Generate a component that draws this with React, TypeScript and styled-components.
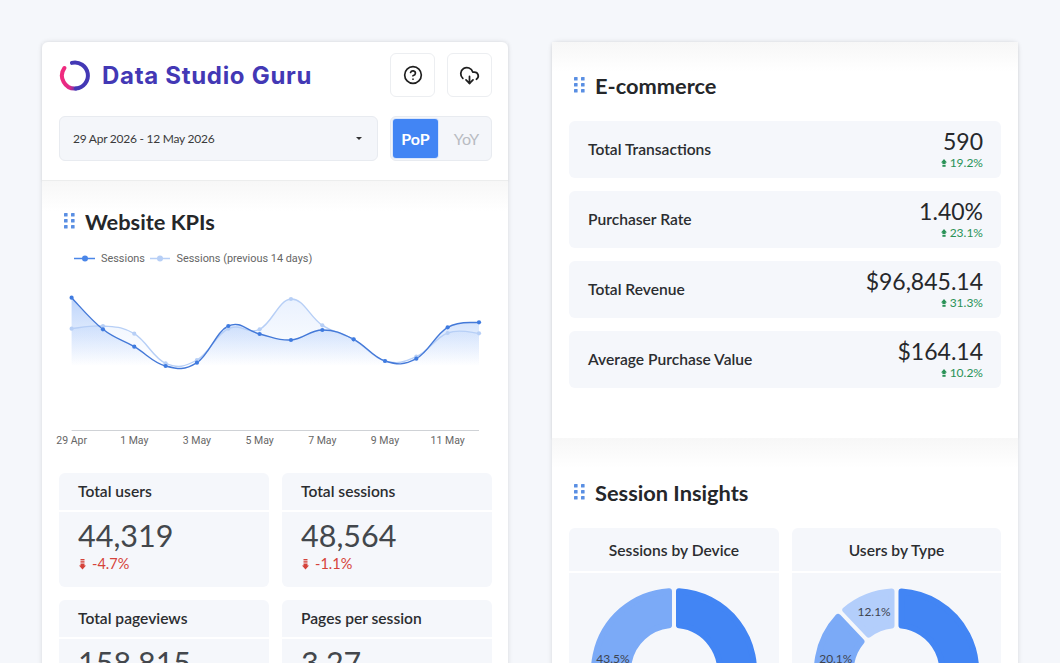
import React from "react";
import styled, { createGlobalStyle } from "styled-components";
import { CircleHelp, CloudDownload } from "lucide-react";

const Global = createGlobalStyle`
  html, body { margin: 0; padding: 0; height: 663px; overflow: hidden; background: #f5f7fb; }
  * { box-sizing: border-box; }
  body { font-family: "Lato", "Liberation Sans", sans-serif; color: #222; }
`;

const Page = styled.div`
  height: 663px;
  overflow: hidden;
  display: flex;
  gap: 44px;
  padding: 42px 42px 0;
  align-items: flex-start;
`;
const Card = styled.main`
  flex: 0 0 466px;
  background: #fff;
  border-radius: 6px 6px 0 0;
  box-shadow: 0 0 5px rgba(0, 0, 0, 0.12);
`;
const Header = styled.header`
  position: relative;
  padding: 11px 16px 19px 17px;
  border-bottom: 1px solid #eceded;
  box-shadow: 0 1px 3px rgba(0, 0, 0, 0.05);
  display: flex;
  flex-direction: column;
  gap: 19px;
  height: 139px;
`;
const TopRow = styled.div`
  display: flex;
  align-items: center;
  gap: 12px;
`;
const Logo = styled.div`
  flex: 1;
  display: flex;
  align-items: center;
  gap: 10px;
  font-family: "Inter", sans-serif;
  font-weight: 700;
  font-size: 24px;
  letter-spacing: 0.7px;
  color: #4338b5;
`;
const IconButton = styled.button`
  width: 45px;
  height: 44px;
  padding: 0;
  display: flex;
  align-items: center;
  justify-content: center;
  background: #fff;
  border: 1px solid #eceef1;
  border-radius: 6px;
  color: #1f1f1f;
`;
const Controls = styled.div`
  display: flex;
  gap: 12px;
`;
const DateSelect = styled.div`
  flex: 1;
  height: 45px;
  display: flex;
  align-items: center;
  justify-content: space-between;
  padding: 0 15px 0 13px;
  background: #f4f6fa;
  border: 1px solid #e8ebf0;
  border-radius: 6px;
  font-size: 12px;
  letter-spacing: -0.25px;
  color: #3a3a3a;
`;
const Caret = styled.span`
  width: 0;
  height: 0;
  border-left: 3px solid transparent;
  border-right: 3px solid transparent;
  border-top: 3px solid #333;
`;
const Toggle = styled.div`
  width: 102px;
  height: 45px;
  padding: 2px;
  display: flex;
  background: #f4f6fa;
  border: 1px solid #e8ebf0;
  border-radius: 6px;
`;
const ToggleItem = styled.div<{ $active?: boolean }>`
  flex: 0 0 ${(p) => (p.$active ? "45px" : "53px")};
  display: flex;
  align-items: center;
  justify-content: center;
  padding-left: ${(p) => (p.$active ? 0 : 4)}px;
  border-radius: 3px;
  font-size: 16px;
  font-weight: ${(p) => (p.$active ? 700 : 400)};
  color: ${(p) => (p.$active ? "#fff" : "#b9bcc2")};
  background: ${(p) => (p.$active ? "#4285f4" : "transparent")};
  box-shadow: ${(p) => (p.$active ? "0 0 0 1px #dbe7fb" : "none")};
`;
const Section = styled.section<{ $top: number; $bottom?: number; $raised?: boolean }>`
  position: relative;
  padding: ${(p) => p.$top}px 17px ${(p) => p.$bottom ?? 0}px;
  background: linear-gradient(#f7f7f7, #fff 30px);
  box-shadow: ${(p) => (p.$raised ? "0 1px 3px rgba(0, 0, 0, 0.06)" : "none")};
`;
const LeftSection = styled(Section)`
  padding-right: 16px;
`;
const TitleRow = styled.div`
  display: flex;
  align-items: center;
  gap: 10px;
  height: 28px;
  padding: 0 0 2px 5px;
  font-size: 21.8px;
  font-weight: 700;
  color: #25272a;
`;
const ChartBox = styled.div`
  margin-top: 9px;
  height: 205px;
`;
const ChartSvg = styled.svg`
  display: block;
  overflow: visible;
`;
const KpiGrid = styled.div`
  margin-top: 23px;
  display: grid;
  grid-template-columns: 210px 210px;
  justify-content: space-between;
  row-gap: 13px;
`;
const Kpi = styled.article`
  border-radius: 6px;
  overflow: hidden;
  display: flex;
  flex-direction: column;
  gap: 2px;
`;
const KpiHead = styled.div`
  height: 37px;
  padding: 0 0 1px 19px;
  display: flex;
  align-items: center;
  background: #f5f7fb;
  font-size: 15.6px;
  font-weight: 600;
  color: #2b2d30;
`;
const KpiBody = styled.div`
  height: 75px;
  padding: 5px 0 0 19px;
  background: #f5f7fb;
`;
const KpiValue = styled.div`
  font-size: 30.5px;
  line-height: 36px;
  color: #43474c;
`;
const KpiDelta = styled.div`
  display: flex;
  align-items: center;
  gap: 6px;
  margin-top: 2px;
  padding-left: 1px;
  font-size: 14.5px;
  line-height: 18px;
  color: #d5423a;
`;
const RowList = styled.div`
  margin-top: 21px;
  display: flex;
  flex-direction: column;
  gap: 13px;
`;
const Row = styled.article`
  height: 57px;
  padding: 0 18px 2px 19px;
  display: flex;
  align-items: center;
  justify-content: space-between;
  background: #f5f7fb;
  border-radius: 6px;
`;
const RowLabel = styled.div`
  font-size: 15.6px;
  font-weight: 600;
  color: #2b2d30;
`;
const RowValues = styled.div`
  display: flex;
  flex-direction: column;
  align-items: flex-end;
`;
const RowValue = styled.div`
  font-size: 23px;
  line-height: 27px;
  color: #26282b;
`;
const RowDelta = styled.div`
  display: flex;
  align-items: center;
  gap: 3px;
  margin-top: 1px;
  font-size: 12px;
  line-height: 14px;
  color: #2a9257;
`;
const DonutGrid = styled.div`
  margin-top: 21px;
  display: grid;
  grid-template-columns: 210px 209px;
  justify-content: space-between;
`;
const DonutCard = styled.article`
  border-radius: 6px 6px 0 0;
  overflow: hidden;
  display: flex;
  flex-direction: column;
  gap: 2px;
`;
const DonutHead = styled.div`
  height: 43px;
  display: flex;
  align-items: center;
  justify-content: center;
  background: #f5f7fb;
  font-size: 15.6px;
  font-weight: 600;
  color: #2b2d30;
`;
const DonutBody = styled.div`
  height: 190px;
  background: #f5f7fb;
  display: flex;
  justify-content: center;
`;

const Dots = () => (
  <svg width="11" height="16" viewBox="0 0 11 16" fill="#5a8fe3">
    {[0, 6, 12].map((y) =>
      [0, 7].map((x) => <rect key={`${x}${y}`} x={x} y={y} width="3.6" height="3.6" rx="0.6" />)
    )}
  </svg>
);

const DownIcon = () => (
  <svg width="7" height="11" viewBox="0 0 7 11" fill="#d5423a">
    <rect x="1.5" y="0" width="4" height="1.4" />
    <rect x="1.5" y="2.2" width="4" height="1.4" />
    <path d="M1.5 4.4h4V6.4H7L3.5 10.6 0 6.4H1.5z" />
  </svg>
);
const UpIcon = () => (
  <svg width="6" height="8" viewBox="0 0 6 8" fill="#2a9257">
    <path d="M3 0 6 3.4H4.6V5H1.4V3.4H0z" />
    <rect x="1.4" y="5.8" width="3.2" height="2" />
  </svg>
);

const LogoMark = () => (
  <svg width="33" height="33" viewBox="0 0 33 33" fill="none" strokeWidth="4" strokeLinecap="round">
    <defs>
      <linearGradient id="lg" gradientUnits="userSpaceOnUse" x1="3" y1="16" x2="20" y2="20">
        <stop offset="0" stopColor="#f02a7e" />
        <stop offset="0.6" stopColor="#e02a88" />
        <stop offset="1" stopColor="#4338b5" />
      </linearGradient>
    </defs>
    <path d="M5.400 9A13 13 0 0 0 17 29.500" stroke="url(#lg)" />
    <path d="M12.900 3.900A13 13 0 1 1 17 29.500" stroke="#4338b5" />
  </svg>
);

const STEP = (479 - 71.6) / 13;
const cur = [297.7, 329.3, 346.7, 366, 362.7, 326, 334, 340, 330, 339.3, 361, 358.7, 327.3, 322.3];
const prev = [328.7, 326, 333.7, 363.3, 360, 328.7, 329.3, 299, 325.3, 339.3, 361, 356.7, 333, 333.3];
const pts = (a: number[]) => a.map((y, i) => [71.6 - 59 + i * STEP, y - 245] as const);

function smooth(a: number[]) {
  const p = pts(a);
  let d = `M${p[0][0]} ${p[0][1]}`;
  for (let i = 0; i < p.length - 1; i++) {
    const p0 = p[Math.max(i - 1, 0)];
    const p1 = p[i];
    const p2 = p[i + 1];
    const p3 = p[Math.min(i + 2, p.length - 1)];
    const k = 0.2;
    d += `C${p1[0] + (p2[0] - p0[0]) * k} ${p1[1] + (p2[1] - p0[1]) * k} ${p2[0] - (p3[0] - p1[0]) * k} ${p2[1] - (p3[1] - p1[1]) * k} ${p2[0]} ${p2[1]}`;
  }
  return d;
}
const area = (a: number[]) => `${smooth(a)}L${pts(a)[13][0]} 121L${pts(a)[0][0]} 121Z`;

const ticks = ["29 Apr", "1 May", "3 May", "5 May", "7 May", "9 May", "11 May"];
const tickText = { fontFamily: "Roboto, sans-serif", fontSize: 10.5, fill: "#666" };
const legendText = { fontFamily: "Roboto, sans-serif", fontSize: 10.9, fill: "#666" };

const Chart = () => (
  <ChartSvg width="433" height="205" viewBox="0 0 433 205">
    <defs>
      <linearGradient id="a1" gradientUnits="userSpaceOnUse" x1="0" y1="50" x2="0" y2="121">
        <stop offset="0" stopColor="#4285f4" stopOpacity="0.36" />
        <stop offset="1" stopColor="#4285f4" stopOpacity="0" />
      </linearGradient>
      <linearGradient id="a2" gradientUnits="userSpaceOnUse" x1="0" y1="50" x2="0" y2="121">
        <stop offset="0" stopColor="#b3cefb" stopOpacity="0.3" />
        <stop offset="1" stopColor="#b3cefb" stopOpacity="0" />
      </linearGradient>
    </defs>
    <line x1="15" x2="36" y1="13.5" y2="13.5" stroke="#4a86e8" strokeWidth="1.5" />
    <circle cx="26" cy="13.5" r="3" fill="#4a86e8" />
    <text x="42" y="17" {...legendText}>Sessions</text>
    <line x1="91" x2="111" y1="13.5" y2="13.5" stroke="#b7cff6" strokeWidth="1.5" />
    <circle cx="101" cy="13.5" r="3" fill="#b7cff6" />
    <text x="117.500" y="17" {...legendText}>Sessions (previous 14 days)</text>

    <path d={area(prev)} fill="url(#a2)" />
    <path d={area(cur)} fill="url(#a1)" />
    <path d={smooth(prev)} fill="none" stroke="#b7cff6" strokeWidth="1.4" />
    <path d={smooth(cur)} fill="none" stroke="#4479d8" strokeWidth="1.4" />
    {pts(prev).map(([x, y], i) => (
      <circle key={i} cx={x} cy={y} r="2.1" fill="#b7cff6" />
    ))}
    {pts(cur).map(([x, y], i) => (
      <circle key={i} cx={x} cy={y} r="2.1" fill="#3f7be0" />
    ))}
    <line x1="12.600" x2="420" y1="185.5" y2="185.5" stroke="#cfd2d6" />
    {ticks.map((t, i) => (
      <text key={t} x={12.6 + i * 2 * STEP} y="199" textAnchor="middle" {...tickText}>{t}</text>
    ))}
  </ChartSvg>
);

const R1 = 83, R0 = 43, CX = 105, CY = 98;
function sector(fromDeg: number, toDeg: number) {
  const inset = 3;
  const outer = R1 - inset;
  const inner = R0 + inset;
  const gapO = ((2 + inset) / outer) * (180 / Math.PI);
  const gapI = ((2 + inset) / inner) * (180 / Math.PI);
  const pt = (r: number, deg: number) => {
    const t = (deg * Math.PI) / 180;
    return `${CX + r * Math.sin(t)} ${CY - r * Math.cos(t)}`;
  };
  const large = toDeg - fromDeg > 180 ? 1 : 0;
  return `M${pt(outer, fromDeg + gapO)}A${outer} ${outer} 0 ${large} 1 ${pt(outer, toDeg - gapO)}L${pt(inner, toDeg - gapI)}A${inner} ${inner} 0 ${large} 0 ${pt(inner, fromDeg + gapI)}Z`;
}
const Seg = ({ from, to, color }: { from: number; to: number; color: string }) => (
  <path d={sector(from, to)} fill={color} stroke={color} strokeWidth="6" strokeLinejoin="round" />
);
const donutText = { fontFamily: "Lato, sans-serif", fontSize: 12, fill: "#3e4450", textAnchor: "middle" as const };

const Donut = ({ children }: { children: React.ReactNode }) => (
  <svg width="210" height="190" viewBox="0 0 210 190">{children}</svg>
);

const kpis = [
  ["Total users", "44,319", "-4.7%"],
  ["Total sessions", "48,564", "-1.1%"],
  ["Total pageviews", "158,815", "-1.9%"],
  ["Pages per session", "3.27", "-0.8%"],
];
const rows = [
  ["Total Transactions", "590", "19.2%"],
  ["Purchaser Rate", "1.40%", "23.1%"],
  ["Total Revenue", "$96,845.14", "31.3%"],
  ["Average Purchase Value", "$164.14", "10.2%"],
];

export default function App() {
  return (
    <Page>
      <Global />
      <Card>
        <Header>
          <TopRow>
            <Logo>
              <LogoMark />
              Data Studio Guru
            </Logo>
            <IconButton aria-label="Help">
              <CircleHelp size={20} strokeWidth={2} />
            </IconButton>
            <IconButton aria-label="Download">
              <CloudDownload size={21} strokeWidth={2} />
            </IconButton>
          </TopRow>
          <Controls>
            <DateSelect>
              29 Apr 2026 - 12 May 2026
              <Caret />
            </DateSelect>
            <Toggle>
              <ToggleItem $active>PoP</ToggleItem>
              <ToggleItem>YoY</ToggleItem>
            </Toggle>
          </Controls>
        </Header>
        <LeftSection $top={27} $bottom={30}>
          <TitleRow>
            <Dots />
            Website KPIs
          </TitleRow>
          <ChartBox>
            <Chart />
          </ChartBox>
          <KpiGrid>
            {kpis.map(([label, value, delta]) => (
              <Kpi key={label}>
                <KpiHead>{label}</KpiHead>
                <KpiBody>
                  <KpiValue>{value}</KpiValue>
                  <KpiDelta>
                    <DownIcon />
                    {delta}
                  </KpiDelta>
                </KpiBody>
              </Kpi>
            ))}
          </KpiGrid>
        </LeftSection>
      </Card>
      <Card>
        <Section $top={30} $bottom={50} $raised>
          <TitleRow>
            <Dots />
            E-commerce
          </TitleRow>
          <RowList>
            {rows.map(([label, value, delta]) => (
              <Row key={label}>
                <RowLabel>{label}</RowLabel>
                <RowValues>
                  <RowValue>{value}</RowValue>
                  <RowDelta>
                    <UpIcon />
                    {delta}
                  </RowDelta>
                </RowValues>
              </Row>
            ))}
          </RowList>
        </Section>
        <Section $top={41}>
          <TitleRow>
            <Dots />
            Session Insights
          </TitleRow>
          <DonutGrid>
            <DonutCard>
              <DonutHead>Sessions by Device</DonutHead>
              <DonutBody>
                <Donut>
                  <Seg from={0} to={203.4} color="#4285f4" />
                  <Seg from={203.4} to={360} color="#7baaf7" />
                  <text x="44" y="90" {...donutText}>43.5%</text>
                </Donut>
              </DonutBody>
            </DonutCard>
            <DonutCard>
              <DonutHead>Users by Type</DonutHead>
              <DonutBody>
                <Donut>
                  <Seg from={0} to={244.1} color="#4285f4" />
                  <Seg from={244.1} to={316.4} color="#7baaf7" />
                  <Seg from={316.4} to={360} color="#b3cefb" />
                  <text x="82.500" y="43" {...donutText}>12.1%</text>
                  <text x="44" y="90" {...donutText}>20.1%</text>
                </Donut>
              </DonutBody>
            </DonutCard>
          </DonutGrid>
        </Section>
      </Card>
    </Page>
  );
}
